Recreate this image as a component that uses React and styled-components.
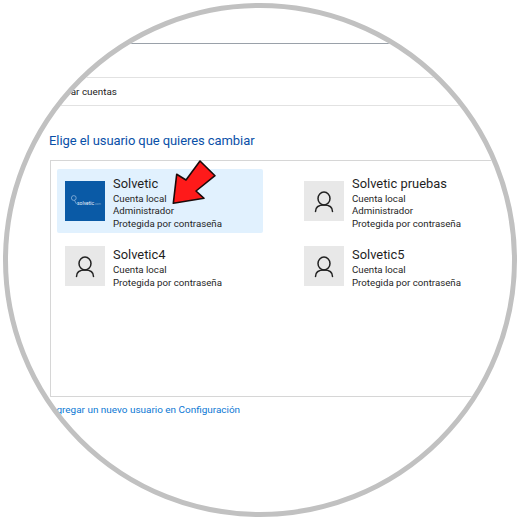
import React from 'react';
import styled, { createGlobalStyle } from 'styled-components';

const GlobalStyle = createGlobalStyle`
  html, body {
    margin: 0;
    background: #fff;
  }
  body {
    font-family: Roboto, "Noto Sans", sans-serif;
  }
`;

const Page = styled.div`
  width: 520px;
  height: 520px;
  padding: 3px;
  box-sizing: border-box;
`;

const Lens = styled.div`
  width: 514px;
  height: 514px;
  box-sizing: border-box;
  border: 5px solid #c1c1c1;
  border-radius: 50%;
  overflow: hidden;
  background: #fff;
`;

const TopRule = styled.div`
  margin-top: 35px;
  border-top: 1px solid #9aa1a9;
`;

const FilterBar = styled.div`
  margin-top: 33px;
  height: 27px;
  display: flex;
  align-items: center;
  padding-left: 37px;
  border-top: 1px solid #e2e2e2;
  border-bottom: 1px solid #e2e2e2;
  font-size: 9.9px;
  color: #1a1a1a;
`;

const Section = styled.div`
  padding-left: 42px;
`;

const Title = styled.h2`
  margin: 25px 0 0 -1px;
  height: 29px;
  font-size: 13px;
  letter-spacing: -0.08px;
  line-height: 20px;
  font-weight: 400;
  color: #0a50a8;
`;

const UserBox = styled.div`
  width: 520px;
  height: 237px;
  box-sizing: border-box;
  padding: 8px 6px;
  border: 1px solid #d6d6d6;
`;

const UserGrid = styled.div`
  display: grid;
  grid-template-columns: 239px 239px;
  grid-auto-rows: 64px;
  row-gap: 1px;
`;

const Card = styled.div`
  position: relative;
  width: 206px;
  box-sizing: border-box;
  padding-left: 8px;
  display: flex;
  align-items: center;
  gap: 8px;
  border-radius: 2px;
  background: ${(p) => (p.$active ? '#e1f1fe' : 'transparent')};
`;

const Avatar = styled.div`
  flex: none;
  width: 40px;
  height: 40px;
  display: flex;
  align-items: center;
  justify-content: center;
  background: #e8e8e8;
`;

const LogoTile = styled.div`
  flex: none;
  width: 40px;
  height: 40px;
  box-sizing: border-box;
  padding: 14px 0 0 6px;
  display: flex;
  align-items: flex-start;
  background: #0a5aa6;
`;

const Info = styled.div`
  display: flex;
  flex-direction: column;
  padding-top: 3px;
  white-space: nowrap;
`;

const Name = styled.div`
  font-size: 12.9px;
  line-height: 18px;
  color: #1f1f1f;
`;

const Detail = styled.div`
  font-size: 9.7px;
  line-height: 12.6px;
  color: #262626;
`;

const LogoText = styled.span`
  font-size: 5px;
  line-height: 1;
  color: #e8f1fa;
  margin-top: 6px;
  white-space: nowrap;
`;

const LogoSuffix = styled.span`
  font-size: 3px;
  color: #7ea6d0;
`;

const ArrowMark = styled.svg`
  position: absolute;
  left: 113px;
  top: -11px;
  width: 50px;
  height: 50px;
`;

const AddLink = styled.a`
  display: block;
  margin-top: 6px;
  font-size: 9.95px;
  line-height: 14px;
  color: #0a78d4;
  white-space: nowrap;
`;

const users = [
  { name: 'Solvetic', admin: true, logo: true },
  { name: 'Solvetic pruebas', admin: true },
  { name: 'Solvetic4' },
  { name: 'Solvetic5' },
];

function UserIcon() {
  return (
    <svg width="40" height="40" viewBox="0 0 40 40" fill="none" stroke="#222" strokeWidth="1.5">
      <ellipse cx="20" cy="17.5" rx="6" ry="6.5" />
      <path d="M11.5 30.5C11.5 26 15 24 20 24s8.500 2 8.500 6.500" strokeLinecap="round" />
    </svg>
  );
}

function LogoBulb() {
  return (
    <svg width="6" height="10" viewBox="0 0 6 10" fill="none" stroke="#b9d2ec" strokeWidth="0.6">
      <circle cx="2.800" cy="3" r="2.400" />
      <path d="M3.500 5.400L5.500 9" />
    </svg>
  );
}

function Arrow() {
  return (
    <ArrowMark viewBox="0 0 50 50">
      <polygon
        points="3.300,45.300 6.700,16.300 16,22 30,3 45,17.700 26,33 34,40.300"
        fill="#fe1a1a"
        stroke="#1a0a0a"
        strokeWidth="1.6"
        strokeLinejoin="round"
      />
    </ArrowMark>
  );
}

export default function App() {
  return (
    <Page>
      <GlobalStyle />
      <Lens>
        <TopRule />
        <FilterBar>Mostrar cuentas</FilterBar>
        <Section>
          <Title>Elige el usuario que quieres cambiar</Title>
          <UserBox>
            <UserGrid>
              {users.map((u) => (
                <Card key={u.name} $active={u.logo}>
                  {u.logo ? (
                    <LogoTile>
                      <LogoBulb />
                      <LogoText>
                        solvetic<LogoSuffix>.com</LogoSuffix>
                      </LogoText>
                    </LogoTile>
                  ) : (
                    <Avatar>
                      <UserIcon />
                    </Avatar>
                  )}
                  <Info>
                    <Name>{u.name}</Name>
                    <Detail>Cuenta local</Detail>
                    {u.admin && <Detail>Administrador</Detail>}
                    <Detail>Protegida por contraseña</Detail>
                  </Info>
                  {u.logo && <Arrow />}
                </Card>
              ))}
            </UserGrid>
          </UserBox>
          <AddLink>Agregar un nuevo usuario en Configuración</AddLink>
        </Section>
      </Lens>
    </Page>
  );
}
